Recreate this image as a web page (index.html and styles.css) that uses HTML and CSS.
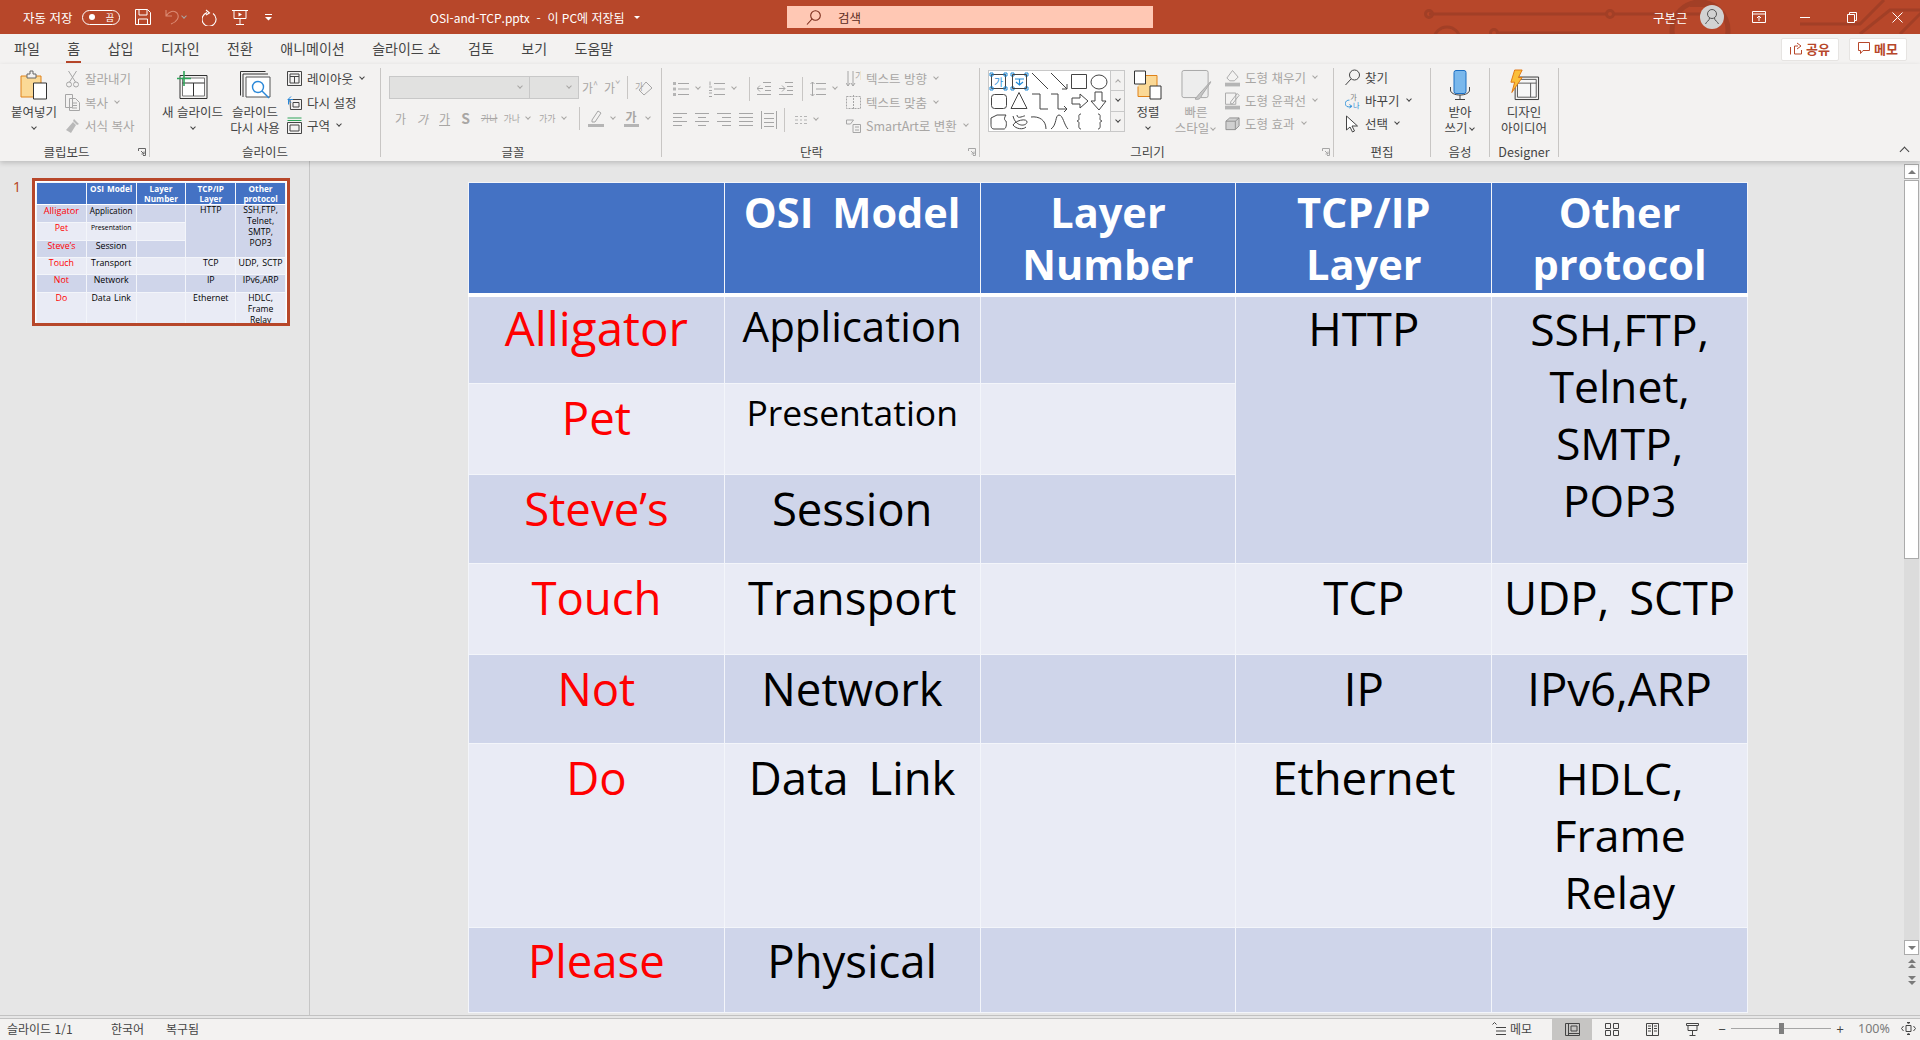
FILE: index.html
```html
<!DOCTYPE html>
<html lang="ko">
<head>
<meta charset="utf-8">
<title>OSI-and-TCP.pptx</title>
<link rel="stylesheet" href="styles.css">
</head>
<body>
<div class="app">
  <header class="titlebar">
    <svg class="circuit" width="520" height="34" viewBox="0 0 520 34" fill="none" stroke="#A23F26" stroke-width="3">
      <path d="M9 14H186M194 14H300"/><circle cx="9" cy="14" r="3.5"/><circle cx="190" cy="14" r="3.5"/>
      <circle cx="27" cy="40" r="13"/><circle cx="74" cy="33" r="3.5"/><path d="M78 33H160"/>
      <circle cx="280" cy="30" r="28" stroke-width="5"/><path d="M270 5h22l-8 16" stroke-width="4"/>
      <path d="M380 24h60l24-24M440 34l30-24h50M480 34l24-24"/>
    </svg>
    <span class="tb-label tb-autosave">자동 저장</span>
    <span class="toggle"><i class="toggle-dot"></i><b class="toggle-txt">끔</b></span>
    <svg class="qa qa-save" width="16" height="16" viewBox="0 0 16 16" fill="none" stroke="#fff"><path d="M.5.5h12l3 3v12H.5zM4 .5V6h8V.5M3.5 15.5V10h9v5.5"/></svg>
    <svg class="qa qa-undo" width="15" height="16" viewBox="0 0 15 16" fill="none" stroke="#DB8A73" stroke-width="1.1"><path d="M1 1v6h6M1 7c3-5 8-6 11-3 3 4 0 9-6 11"/></svg>
    <i class="chev chev-dim qa-undo-c"></i>
    <svg class="qa qa-redo" width="16" height="17" viewBox="0 0 16 17" fill="none" stroke="#fff" stroke-width="1.1"><path d="M11 4.500A7 7 0 1 1 5 3.600M4 1l3.500 3L4 6"/></svg>
    <svg class="qa qa-show" width="16" height="16" viewBox="0 0 16 16" fill="none" stroke="#fff"><path d="M0 1.500h16M2 1.500v8h12v-8M8 9.500V15M4 15.500h8"/><path d="M6.500 3.500l3.500 2-3.500 2z" fill="#fff" stroke="none"/></svg>
    <svg class="qa qa-more" width="7" height="7" viewBox="0 0 7 7" fill="#fff"><path d="M0 0h7v1H0zM0 3h7L3.500 6.500z"/></svg>
    <span class="tb-label tb-file">OSI-and-TCP.pptx  -  이 PC에 저장됨</span>
    <i class="tb-caret"></i>
    <div class="search">
      <svg width="15" height="15" viewBox="0 0 15 15" fill="none" stroke="#7A2C1B" stroke-width="1.100"><circle cx="9.500" cy="5.500" r="4.800"/><path d="M6 9l-5 5.500"/></svg>
      <span>검색</span>
    </div>
    <span class="tb-label tb-user">구본근</span>
    <span class="avatar"><svg width="24" height="24" viewBox="0 0 24 24" fill="none" stroke="#555"><circle cx="12" cy="9" r="4.500"/><path d="M9.500 13c0 3-3 3-4 6M14.500 13c0 3 3 3 4 6"/></svg></span>
    <svg class="win win-ribbon" width="14" height="12" viewBox="0 0 14 12" fill="none" stroke="#fff"><path d="M.5.5h13v11H.5zM.5 3h13M7 10V5M5 7l2-2 2 2"/></svg>
    <svg class="win win-min" width="10" height="10" viewBox="0 0 10 10" stroke="#fff"><path d="M0 5.500h10"/></svg>
    <svg class="win win-rest" width="10" height="11" viewBox="0 0 10 11" fill="none" stroke="#fff"><path d="M.5 2.500h7v8h-7zM2.500 2.500V.5h7v8h-2"/></svg>
    <svg class="win win-close" width="11" height="11" viewBox="0 0 11 11" stroke="#fff"><path d="M.5.5l10 10M10.500.5l-10 10"/></svg>
  </header>

  <nav class="tabs">
    <span class="tab">파일</span><span class="tab tab-on">홈</span><span class="tab">삽입</span><span class="tab">디자인</span><span class="tab">전환</span><span class="tab">애니메이션</span><span class="tab">슬라이드 쇼</span><span class="tab">검토</span><span class="tab">보기</span><span class="tab">도움말</span>
    <button class="pill pill-share"><svg width="12" height="13" viewBox="0 0 12 13" fill="none" stroke="#B7472A"><path d="M8 4H4.500v8h7V8M.5 12.500V5M7 1l4 3-4 3"/></svg>공유</button>
    <button class="pill"><svg width="12" height="12" viewBox="0 0 12 12" fill="none" stroke="#B7472A"><path d="M.5.5h11v8H5l-2.500 3v-3h-2z"/></svg>메모</button>
  </nav>

  <section class="ribbon">
    <div class="group g1">
      <div class="gbody">
        <div class="large w48">
          <svg class="lg-icon" width="28" height="30" viewBox="0 0 28 30" fill="none"><path d="M1 6h20v21H1z" fill="#FBD996" stroke="#E08218"/><path d="M7 4h3V1h3v3h3v4H7z" fill="#F3F2F1" stroke="#666"/><path d="M13.500 13h13v16h-13z" fill="#fff" stroke="#333"/></svg>
          <span>붙여넣기</span><i class="chev chev-lg"></i>
        </div>
        <div class="rows off ml7">
          <div class="row"><svg width="14" height="18" viewBox="0 0 14 18" fill="none" stroke="#A6A6A6"><path d="M3 1l7 11M11 1L4 12"/><circle cx="3.500" cy="14.500" r="2.500"/><circle cx="10.500" cy="14.500" r="2.500"/></svg>잘라내기</div>
          <div class="row"><svg width="15" height="17" viewBox="0 0 15 17" fill="none" stroke="#A6A6A6"><path d="M.5.5h7v13h-7zM4.500 4.500h6l4 4v8h-10zM7 9h5M7 11.500h5M7 14h5"/></svg>복사<i class="chev chev-dim ml10"></i></div>
          <div class="row"><svg width="15" height="16" viewBox="0 0 15 16" fill="#B9B9B9"><path d="M9 1l5 5-2 1-4-4zM8 4l3 3-5 8-5-3z"/></svg>서식 복사</div>
        </div>
      </div>
      <div class="glabel lab16">클립보드<svg class="launcher" width="8" height="8" viewBox="0 0 8 8" fill="none" stroke="#666"><path d="M.5 3V.5h7v7H5M3 3l3 3M6 3.500V6H3.500"/></svg></div>
    </div>

    <div class="group g2">
      <div class="gbody">
        <div class="large w63">
          <svg class="lg-icon" width="31" height="30" viewBox="0 0 31 30" fill="none"><path d="M3 5.500h27v23H3z" stroke="#333"/><path d="M5.500 8h22v18h-22z" stroke="#777" fill="#fff"/><path d="M5.500 13h22M16.500 13v13" stroke="#333"/><path d="M0 8.500h14M7 1v15" stroke="#2FA55A" stroke-width="1.600"/></svg>
          <span>새 슬라이드</span><i class="chev chev-lg"></i>
        </div>
        <div class="large w52 ml5">
          <svg class="lg-icon" width="31" height="30" viewBox="0 0 31 30" fill="none"><path d="M.5 1.500h25M.5 1.500v24M3 4h25M3 4v23" stroke="#333"/><path d="M6 7h24v20H6z" stroke="#555" fill="#fff"/><circle cx="18" cy="17" r="5.500" stroke="#2B88D8" stroke-width="1.400"/><path d="M22 21l7 7" stroke="#2B88D8" stroke-width="1.400"/></svg>
          <span>슬라이드</span><span>다시 사용</span>
        </div>
        <div class="rows ml6">
          <div class="row"><svg width="15" height="15" viewBox="0 0 15 15" fill="none" stroke="#444"><path d="M.5.5h14v14H.5zM3 3h9v9H3zM3 5.500h9M7.500 5.500V12"/></svg>레이아웃<i class="chev"></i></div>
          <div class="row"><svg width="15" height="15" viewBox="0 0 15 15" fill="none"><path d="M3 4.500h11.500v10h-11zM6 7.500h6v4.500H6z" stroke="#444"/><path d="M1 4.500h5M1 4.500l3-3M1 4.500l3 3M1.500 4.500v5" stroke="#2B88D8"/></svg>다시 설정</div>
          <div class="row"><svg width="15" height="17" viewBox="0 0 15 17" fill="none"><path d="M.5 3.500h14M.5 1h14" stroke="#2FA55A"/><path d="M.5 5.500h14v11H.5zM3 8h9v6H3z" stroke="#444"/></svg>구역<i class="chev"></i></div>
        </div>
      </div>
      <div class="glabel">슬라이드</div>
    </div>

    <div class="group g3">
      <div class="gbody gcol">
        <div class="fontrow">
          <span class="combo c-name"><i class="chev chev-dim"></i></span><span class="combo c-size"><i class="chev chev-dim"></i></span>
          <span class="glyph gl1">가<sup>^</sup></span><span class="glyph gl2">가<sup>ˇ</sup></span><span class="vsep"></span>
          <svg class="eraser" width="18" height="18" viewBox="0 0 18 18" fill="none" stroke="#A6A6A6"><path d="M9 16l-5-5 7-8 6 6z"/><text x="0" y="11" class="ertxt">가</text></svg>
        </div>
        <div class="fontrow2">
          <span class="glyph">가</span><span class="glyph gi">가</span><span class="glyph gu">가</span><b class="glyph gs">S</b><span class="glyph gstr">가나</span><span class="glyph tiny t1">가나<i class="chev chev-dim"></i></span><span class="glyph tiny t2">가가<i class="chev chev-dim"></i></span><span class="vsep vsep2"></span>
          <svg class="pen" width="16" height="18" viewBox="0 0 16 18" fill="none"><path d="M4 11l6-9 3 2-6 9H4z" stroke="#A6A6A6"/><path d="M0 15h16v3H0z" fill="#B5B5B5"/></svg><i class="chev chev-dim"></i>
          <span class="glyph gbar">가</span><i class="chev chev-dim"></i>
        </div>
      </div>
      <div class="glabel lab16">글꼴</div>
    </div>

    <div class="group g4">
      <div class="gbody">
        <div class="para">
          <div class="pararow">
            <svg width="16" height="16" viewBox="0 0 16 16" stroke="#A6A6A6" fill="none"><path d="M5 2.500h11M5 8h11M5 13.500h11"/><path d="M0 1h3v3H0zM0 6.500h3v3H0zM0 12h3v3H0z" fill="#B5B5B5" stroke="none"/></svg><i class="chev chev-dim"></i>
            <svg class="ml9" width="16" height="16" viewBox="0 0 16 16" stroke="#A6A6A6" fill="none"><path d="M5 2.500h11M5 8h11M5 13.500h11M1 .5v4M0 6h3M0 9.500h3M0 12h3M0 15.500h3"/></svg><i class="chev chev-dim"></i>
            <span class="vsep vs3"></span>
            <svg width="14" height="13" viewBox="0 0 14 13" stroke="#A6A6A6" fill="none"><path d="M6 .5h8M8 4.500h6M8 8.500h6M0 12.500h14M0 6.500h6M3 3.500l-3 3 3 3"/></svg>
            <svg class="ml8" width="14" height="13" viewBox="0 0 14 13" stroke="#A6A6A6" fill="none"><path d="M6 .5h8M8 4.500h6M8 8.500h6M0 12.500h14M0 6.500h6M3 3.500l3 3-3 3"/></svg>
            <span class="vsep vs5"></span>
            <svg width="16" height="16" viewBox="0 0 16 16" stroke="#A6A6A6" fill="none"><path d="M6 2.500h10M6 8h10M6 13.500h10M2.500 1v14M.5 3l2-2 2 2M.5 13l2 2 2-2"/></svg><i class="chev chev-dim"></i>
          </div>
          <div class="pararow pr2">
            <svg width="14" height="13" viewBox="0 0 14 13" stroke="#A6A6A6"><path d="M0 .5h14M0 4.500h9M0 8.500h14M0 12.500h9"/></svg>
            <svg class="ml8" width="14" height="13" viewBox="0 0 14 13" stroke="#A6A6A6"><path d="M0 .5h14M3 4.500h8M0 8.500h14M3 12.500h8"/></svg>
            <svg class="ml8" width="14" height="13" viewBox="0 0 14 13" stroke="#A6A6A6"><path d="M0 .5h14M5 4.500h9M0 8.500h14M5 12.500h9"/></svg>
            <svg class="ml8" width="14" height="13" viewBox="0 0 14 13" stroke="#A6A6A6"><path d="M0 .5h14M0 4.500h14M0 8.500h14M0 12.500h14"/></svg>
            <svg class="ml8" width="16" height="18" viewBox="0 0 16 18" stroke="#A6A6A6" fill="none"><path d="M.5 0v18M15.500 0v18M3 2.500h10M3 7.500h10M3 11.500h10M3 15.500h10"/></svg>
            <span class="vsep vs4"></span>
            <svg width="12" height="8" viewBox="0 0 12 8" stroke="#B5B5B5"><path d="M0 .5h3M5 .5h2M9 .5h3M0 4h3M5 4h2M9 4h3M0 7.500h3M5 7.500h2M9 7.500h3"/></svg><i class="chev chev-dim"></i>
          </div>
        </div>
        <div class="rows off pararight">
          <div class="row"><svg width="15" height="18" viewBox="0 0 15 18" fill="none" stroke="#A6A6A6"><path d="M2 1v15M0 13l2 3 2-3M7 1v15M5 13l2 3 2-3"/><text x="9" y="9" class="ertxt">가</text></svg>텍스트 방향<i class="chev chev-dim"></i></div>
          <div class="row"><svg width="15" height="15" viewBox="0 0 15 15" fill="none" stroke="#A6A6A6" stroke-dasharray="2 1"><path d="M.5 1.500h14v12H.5zM7.500 0v15"/></svg>텍스트 맞춤<i class="chev chev-dim"></i></div>
          <div class="row"><svg width="15" height="14" viewBox="0 0 15 14" fill="none" stroke="#A6A6A6"><path d="M.5 1h7l-3 4h-4zM7 5.500h7.500v8H7zM9 8h4M9 11h4"/></svg>SmartArt로 변환<i class="chev chev-dim"></i></div>
        </div>
      </div>
      <div class="glabel lab18">단락<svg class="launcher" width="8" height="8" viewBox="0 0 8 8" fill="none" stroke="#A6A6A6"><path d="M.5 3V.5h7v7H5M3 3l3 3M6 3.500V6H3.500"/></svg></div>
    </div>

    <div class="group g5">
      <div class="gbody">
        <div class="gallery">
          <svg width="121" height="60" viewBox="0 0 121 60" fill="none" stroke="#444">
            <path d="M2.500 3.500h14v14h-14z"/><path d="M1 2h3v3H1zM15 2h3v3h-3zM1 16h3v3H1zM15 16h3v3h-3zM22 2h3v3h-3zM36 2h3v3h-3zM22 16h3v3h-3zM36 16h3v3h-3z" stroke="#1F8AD8"/>
            <text x="5" y="15" class="galtxt">가</text><path d="M23.500 3.500h14v14h-14z"/><path d="M26 8h9M30.500 8v6M27 11l3.500 3 3.500-3" stroke="#1F8AD8" stroke-width="1.200"/>
            <path d="M43 2l16 16M62 2l16 16M78 18v-5M78 18h-5"/><path d="M82.500 3.500h15v14h-15z"/><ellipse cx="110" cy="11" rx="8" ry="7"/>
            <rect x="2.500" y="23.500" width="15" height="14" rx="3"/><path d="M27 37.500h-5l8-16 8 16z"/><path d="M43 23h8v15h8M62 23h7v15h9M78 38l-3-3M78 38l-3 3"/><path d="M83 27h8v-4l8 7-8 7v-4h-8zM106 21h7v9h4l-7 9-8-9h4z"/>
            <path d="M8 44h9c-2 3-2 5 0 6 1 3 0 8-2 8H5c-3 0-3-3-3-5v-6z"/><path d="M24 45c3 12 14 10 14 6s-11-2-14 3c3 4 10 5 13 2M28 44c0 5 8 0 8 1"/><path d="M42 46c8-1 15 3 15 12M62 58c6-4 4-14 8-14 4 0 5 10 9 14"/><path d="M92 43c-3 0-2 3-2 5 0 1-1 2-2 2 1 0 2 1 2 2 0 2-1 6 2 6M109 43c3 0 2 3 2 5 0 1 1 2 2 2-1 0-2 1-2 2 0 2 1 6-2 6"/>
          </svg>
          <div class="galscroll"><span class="gs-up"><i class="chev chev-up"></i></span><span class="gs-mid"><i class="chev"></i></span><span class="gs-end"><i class="chev"></i></span></div>
        </div>
        <div class="large w38 ml4">
          <svg class="lg-icon" width="28" height="29" viewBox="0 0 28 29" fill="none"><path d="M8 5h15v21H4V16" fill="#FBD996" stroke="#E08218"/><path d="M.5.5h11v13H.5z" fill="#fff" stroke="#333"/><path d="M16 15.500h11v13H16z" fill="#fff" stroke="#333"/></svg>
          <span>정렬</span><i class="chev chev-lg"></i>
        </div>
        <div class="large w46 ml6 off">
          <svg class="lg-icon" width="31" height="31" viewBox="0 0 31 31" fill="none"><rect x=".5" y=".5" width="27" height="28" rx="2" stroke="#A6A6A6" fill="#EDEDED"/><path d="M30 12L19 24l-5 6c3 1 6 0 7-4l9-13z" fill="#C4C4C4" stroke="#A6A6A6"/></svg>
          <span>빠른</span><span>스타일<i class="chev chev-dim ml3"></i></span>
        </div>
        <div class="rows off ml6 tight">
          <div class="row"><svg width="16" height="18" viewBox="0 0 16 18" fill="none"><path d="M2 9l6-8 6 7-4 4H5z" stroke="#A6A6A6"/><path d="M0 14h16v4H0z" fill="#B5B5B5"/></svg>도형 채우기<i class="chev chev-dim"></i></div>
          <div class="row"><svg width="16" height="18" viewBox="0 0 16 18" fill="none"><path d="M.5.5h11v12H.5zM6 10l7-9 2 2-7 9H6z" stroke="#A6A6A6"/><path d="M0 14h16v4H0z" fill="#B5B5B5"/></svg>도형 윤곽선<i class="chev chev-dim"></i></div>
          <div class="row"><svg width="16" height="14" viewBox="0 0 16 14" fill="#D0D0D0" stroke="#8F8F8F"><path d="M1 4l4-3.500h10V9l-4 4H1zM1 4h10v9M11 4l4-3.500"/></svg>도형 효과<i class="chev chev-dim"></i></div>
        </div>
      </div>
      <div class="glabel lab18">그리기<svg class="launcher" width="8" height="8" viewBox="0 0 8 8" fill="none" stroke="#A6A6A6"><path d="M.5 3V.5h7v7H5M3 3l3 3M6 3.500V6H3.500"/></svg></div>
    </div>

    <div class="group g6">
      <div class="gbody">
        <div class="rows tight">
          <div class="row"><svg width="15" height="17" viewBox="0 0 15 17" fill="none" stroke="#444"><circle cx="9.500" cy="6" r="5"/><path d="M6 10l-5.500 6"/></svg>찾기</div>
          <div class="row"><svg width="17" height="18" viewBox="0 0 17 18" fill="none" stroke="#1F8AD8"><path d="M5 8C1 8-.5 11 1 14c1 2 4 2 6 1M5 13l3 2-3 2"/><text x="6" y="8" class="reptxt">가</text><text x="9" y="17" class="reptxt rep2">나</text></svg>바꾸기<i class="chev ml10"></i></div>
          <div class="row"><svg width="14" height="18" viewBox="0 0 14 18" fill="#fff" stroke="#444"><path d="M1 1v14l3.500-3 2.500 5 2-1-2.500-5H12z"/></svg>선택<i class="chev"></i></div>
        </div>
      </div>
      <div class="glabel">편집</div>
    </div>

    <div class="group g7">
      <div class="gbody">
        <div class="large wfull">
          <svg class="lg-icon" width="20" height="30" viewBox="0 0 20 30" fill="none"><rect x="4" y=".5" width="12" height="23" rx="2" fill="#7AB8EC" stroke="#1B6EC2"/><path d="M.5 17v3c0 3 4 5 9.500 5s9.500-2 9.500-5v-3M10 25v4M5 29.500h10" stroke="#444"/></svg>
          <span>받아</span><span>쓰기<i class="chev ml3"></i></span>
        </div>
      </div>
      <div class="glabel">음성</div>
    </div>

    <div class="group g8">
      <div class="gbody">
        <div class="large wfull">
          <svg class="lg-icon" width="31" height="32" viewBox="0 0 31 32" fill="none"><path d="M5.500 7.500h25v24h-25z" stroke="#333"/><path d="M8 10h20v19H8zM8 14h20M22 14v15" stroke="#555" fill="#F7F7F7"/><path d="M5 0h8L9 8h4L2 24l3-11H1z" fill="#FBBF3A" stroke="#E0740F"/></svg>
          <span>디자인</span><span>아이디어</span>
        </div>
      </div>
      <div class="glabel">Designer</div>
    </div>
    <i class="chev chev-up collapse"></i>
  </section>

  <main class="main">
    <aside class="slides">
      <span class="slidenum">1</span>
      <div class="thumb">
        <table class="deck deck-thumb">
          <tr class="r0"><th></th><th>OSI Model</th><th>Layer Number</th><th>TCP/IP<br>Layer</th><th>Other protocol</th></tr>
          <tr class="r1 dark"><td class="mn big">Alligator</td><td class="appl">Application</td><td></td><td rowspan="3">HTTP</td><td rowspan="3" class="multi">SSH,FTP,<br>Telnet,<br>SMTP,<br>POP3</td></tr>
          <tr class="r2 light"><td class="mn">Pet</td><td class="small">Presentation</td><td></td></tr>
          <tr class="r3 dark"><td class="mn">Steve’s</td><td>Session</td><td></td></tr>
          <tr class="r4 light"><td class="mn">Touch</td><td>Transport</td><td></td><td>TCP</td><td>UDP, SCTP</td></tr>
          <tr class="r5 dark"><td class="mn">Not</td><td>Network</td><td></td><td>IP</td><td>IPv6,ARP</td></tr>
          <tr class="r6 light"><td class="mn">Do</td><td>Data Link</td><td></td><td>Ethernet</td><td class="multi">HDLC,<br>Frame<br>Relay</td></tr>
        </table>
      </div>
    </aside>
    <section class="editor">
      <table class="deck">
        <tr class="r0"><th></th><th>OSI Model</th><th>Layer Number</th><th>TCP/IP<br>Layer</th><th>Other protocol</th></tr>
        <tr class="r1 dark"><td class="mn big">Alligator</td><td class="appl">Application</td><td></td><td rowspan="3">HTTP</td><td rowspan="3" class="multi">SSH,FTP,<br>Telnet,<br>SMTP,<br>POP3</td></tr>
        <tr class="r2 light"><td class="mn">Pet</td><td class="small">Presentation</td><td></td></tr>
        <tr class="r3 dark"><td class="mn">Steve’s</td><td>Session</td><td></td></tr>
        <tr class="r4 light"><td class="mn">Touch</td><td>Transport</td><td></td><td>TCP</td><td>UDP, SCTP</td></tr>
        <tr class="r5 dark"><td class="mn">Not</td><td>Network</td><td></td><td>IP</td><td>IPv6,ARP</td></tr>
        <tr class="r6 light"><td class="mn">Do</td><td>Data Link</td><td></td><td>Ethernet</td><td class="multi">HDLC,<br>Frame<br>Relay</td></tr>
        <tr class="r7 dark"><td class="mn">Please</td><td>Physical</td><td></td><td></td><td></td></tr>
      </table>
    </section>
    <div class="vscroll">
      <span class="sbtn"><i class="tri tri-up"></i></span>
      <span class="sthumb"></span>
      <span class="strack"></span>
      <span class="sbtn"><i class="tri tri-down"></i></span>
      <span class="snav"><i class="tri tri-up"></i><i class="tri tri-up"></i></span>
      <span class="snav"><i class="tri tri-down"></i><i class="tri tri-down"></i></span>
    </div>
  </main>

  <div class="hscroll"></div>

  <footer class="status">
    <span class="st-page">슬라이드 1/1</span><span class="st-lang">한국어</span><span class="st-rec">복구됨</span>
    <span class="st-memo"><svg width="14" height="14" viewBox="0 0 14 14" stroke="#444" fill="none"><path d="M4 5.500h10M4 9h10M4 12.500h10M.5 2.500l2-2 2 2"/></svg>메모</span>
    <span class="view view-on"><svg width="15" height="13" viewBox="0 0 15 13" fill="none" stroke="#444"><path d="M.5.5h14v12H.5zM3.500.5v12M6 3h6v5H6zM3.500 10.500h11"/></svg></span>
    <span class="view"><svg width="14" height="13" viewBox="0 0 14 13" fill="none" stroke="#444"><path d="M.5.5h5v5h-5zM8.500.5h5v5h-5zM.5 7.500h5v5h-5zM8.500 7.500h5v5h-5z"/></svg></span>
    <span class="view"><svg width="13" height="13" viewBox="0 0 13 13" fill="none" stroke="#444"><path d="M.5.5h12v12H.5zM6.500.5v12M2 3h3M2 5.500h3M2 8h3M8 3h3M8 5.500h3M8 8h3"/></svg></span>
    <span class="view"><svg width="13" height="13" viewBox="0 0 13 13" fill="none" stroke="#444"><path d="M.5.5h12v2h-12zM2 2.500v5h9v-5M6.500 7.500v5M3.500 12.500h6"/></svg></span>
    <span class="zoomctl"><i class="zm">−</i><span class="slider"><i class="knob"></i></span><i class="zm">+</i></span>
    <span class="pct">100%</span>
    <svg class="fit" width="15" height="15" viewBox="0 0 15 15" fill="none" stroke="#444"><path d="M5 4.500h5v6H5zM7.500 2.500L6 1.500h3zM7.500 12.500L6 13.500h3zM2.500 5L.5 7.500 2.500 10M12.500 5l2 2.500-2 2.500"/></svg>
  </footer>
</div>
</body>
</html>
```
FILE: styles.css
```css
* { box-sizing: border-box; }
html, body { margin: 0; height: 100%; overflow: hidden; }
body { font-family: "Noto Sans CJK KR", "Noto Sans", sans-serif; color: #444; font-size: 12.5px; }
i { font-style: normal; }
.app { display: flex; flex-direction: column; width: 1920px; height: 1040px; background: #E6E6E6; }

.titlebar { position: relative; display: flex; align-items: center; height: 34px; background: #B7472A; color: #fff; flex: none; overflow: hidden; }
.circuit { position: absolute; left: 1420px; top: 0; }
.tb-label { position: relative; font-size: 12.5px; white-space: pre; }
.tb-autosave { margin-left: 23px; width: 59px; }
.toggle { display: flex; align-items: center; justify-content: space-between; width: 38px; height: 15px; border: 1px solid #fff; border-radius: 8px; padding: 0 5px 0 6px; }
.toggle-dot { width: 6px; height: 6px; background: #fff; border-radius: 50%; }
.toggle-txt { font-weight: 400; font-size: 9px; }
.qa { flex: none; }
.qa-save { margin-left: 15px; }
.qa-undo { margin-left: 14px; }
.qa-undo-c { margin-left: 4px; }
.qa-redo { margin-left: 14px; }
.qa-show { margin-left: 14px; }
.qa-more { margin-left: 17px; }
.tb-file { margin-left: 158px; width: 196px; font-size: 12px; }
.tb-caret { margin-left: 8px; border: 3px solid transparent; border-top: 3px solid #fff; margin-top: 3px; }
.search { display: flex; align-items: center; gap: 17px; margin-left: 147px; width: 366px; height: 22px; padding-left: 19px; background: #FFC8B4; color: #5A2A1C; font-size: 12.5px; }
.tb-user { margin-left: 500px; width: 47px; }
.avatar { position: relative; width: 24px; height: 24px; border-radius: 50%; background: #D2D2D2; overflow: hidden; }
.win { position: relative; flex: none; }
.win-ribbon { margin-left: 28px; }
.win-min { margin-left: 34px; }
.win-rest { margin-left: 37px; }
.win-close { margin-left: 35px; }

.tabs { display: flex; align-items: center; gap: 27.5px; height: 30px; padding: 0 0 3px 14px; background: #F3F2F1; flex: none; font-size: 14px; }
.tab { position: relative; line-height: 30px; white-space: nowrap; }
.tab-on::after { content: ""; position: absolute; left: -1px; right: -1px; bottom: 0; height: 2px; background: #B7472A; }
.pill { display: flex; align-items: center; justify-content: center; gap: 4px; width: 58px; height: 23px; margin: 3px 0 0 -17.5px; padding: 0 0 2px; border: 1px solid #E6E4E2; border-radius: 2px; background: #fff; color: #B7472A; font: 700 13px "Noto Sans CJK KR", sans-serif; }
.pill-share { margin-left: auto; }
.pill:last-child { margin-right: 13px; }

.ribbon { position: relative; z-index: 2; display: flex; align-items: flex-start; height: 97px; padding-top: 4px; background: #F3F2F1; box-shadow: 0 2px 5px rgba(0,0,0,.18); flex: none; font-size: 12.5px; }
.group { position: relative; display: flex; flex-direction: column; height: 89px; border-right: 1px solid #C8C6C4; flex: none; }
.g1 { width: 150px; } .g2 { width: 231px; } .g3 { width: 281px; } .g4 { width: 318px; } .g5 { width: 354px; } .g6 { width: 97px; } .g7 { width: 59px; } .g8 { width: 69px; }
.gbody { display: flex; height: 77px; }
.gcol { flex-direction: column; padding-left: 8px; }
.g1 .gbody { padding-left: 10px; }
.g2 .gbody { padding-left: 11px; }
.g4 .gbody { padding-left: 11px; }
.g5 .gbody { padding-left: 8px; }
.g6 .gbody { padding-left: 11px; }
.glabel { height: 12px; line-height: 14px; text-align: center; font-size: 12.5px; }
.lab16 { padding-right: 16px; }
.lab18 { padding-right: 18px; }
.launcher { position: absolute; right: 3px; bottom: 1px; }

.large { display: flex; flex-direction: column; align-items: center; line-height: 16px; white-space: nowrap; flex: none; }
.lg-icon { height: 30px; margin: 2px 0 4px; flex: none; overflow: visible; }
.w48 { width: 48px; } .w63 { width: 63px; } .w52 { width: 52px; } .w38 { width: 38px; } .w46 { width: 46px; } .wfull { width: 100%; }
.rows { display: flex; flex-direction: column; flex: none; margin-top: -1px; }
.tight { margin-top: -2px; }
.row { display: flex; align-items: center; gap: 5px; height: 23.5px; white-space: nowrap; }
.tight .row { height: 23px; }
.row svg { width: 15px; flex: none; }
.off, .off .row { color: #A8A6A4; }
.ml3 { margin-left: 3px; } .ml4 { margin-left: 4px; } .ml5 { margin-left: 5px; } .ml6 { margin-left: 6px; } .ml7 { margin-left: 7px; } .ml8 { margin-left: 8px; } .ml9 { margin-left: 9px; } .ml10 { margin-left: 10px; }
.ertxt { font: 9px "Noto Sans CJK KR", sans-serif; fill: #A8A6A4; stroke: none; }
.reptxt { font: 8px "Noto Sans CJK KR", sans-serif; fill: #777; stroke: none; }
.rep2 { fill: #1F8AD8; }

.chev { display: inline-block; width: 4px; height: 4px; border-right: 1px solid #444; border-bottom: 1px solid #444; transform: rotate(45deg); margin: 0 2px 3px; flex: none; }
.chev-dim { border-color: #A8A6A4; }
.chev-lg { margin-top: 5px; }
.chev-up { transform: rotate(225deg); margin: 3px 2px 0; }
.collapse { position: absolute; right: 10px; bottom: 6px; width: 7px; height: 7px; }

.fontrow { display: flex; align-items: center; height: 23px; margin-top: 8px; color: #A8A6A4; }
.combo { display: flex; align-items: center; justify-content: flex-end; height: 23px; padding-right: 5px; background: #E1E1E0; border: 1px solid #C8C8C8; }
.c-name { width: 141px; } .c-size { width: 49px; border-left: 0; }
.glyph { color: #A8A6A4; font-size: 12px; }
.glyph sup { font-size: 9px; line-height: 0; }
.gl1 { margin-left: 3px; } .gl2 { margin-left: 6px; }
.vsep { width: 1px; height: 23px; background: #C8C6C4; margin: 0 6px; flex: none; }
.eraser { margin-left: 1px; flex: none; }
.fontrow2 { display: flex; align-items: center; gap: 11px; margin: 8px 0 0 6px; height: 22px; white-space: nowrap; }
.gi { font-style: italic; }
.gu { text-decoration: underline; }
.gs { font-size: 14px; }
.gstr { text-decoration: line-through; font-size: 9px; }
.tiny { font-size: 9px; display: flex; align-items: center; }
.tiny .chev { margin-left: 6px; }
.t1 { margin-left: -5px; }
.t2 { margin-left: -4px; }
.vsep2 { margin: 0; }
.pen { margin-left: -3px; flex: none; }
.gbar { margin-left: -4px; padding: 0 2px; border-bottom: 3px solid #B5B5B5; line-height: 14px; font-weight: 700; }
.fontrow2 > .chev { margin: 0 2px 3px -4px; }

.para { width: 173px; flex: none; }
.pararow { display: flex; align-items: center; height: 23px; margin-top: 9px; }
.pararow .chev { margin: 0 0 3px 7px; }
.pr2 { margin-top: 8px; }
.vs3 { height: 24px; margin: 0 7px 0 13px; }
.vs5 { height: 24px; margin: 0 7px 0 9px; }
.vs4 { height: 24px; margin: 0 10px 0 7px; }

.gallery { display: flex; width: 137px; height: 62px; margin-top: 2px; background: #fff; border: 1px solid #C8C8C8; flex: none; }
.gallery svg { flex: none; overflow: hidden; }
.galtxt { font: 10px "Noto Sans CJK KR", sans-serif; fill: #1F8AD8; stroke: none; }
.galscroll { display: flex; flex-direction: column; width: 15px; margin-left: auto; border-left: 1px solid #C8C8C8; background: #F3F2F1; }
.galscroll span { flex: 1; display: flex; align-items: center; justify-content: center; border-bottom: 1px solid #C8C8C8; }
.galscroll span:last-child { border: 0; }
.gs-up .chev { border-color: #A8A6A4; }

.main { display: flex; flex: 1; min-height: 0; background: #E6E6E6; }
.slides { display: flex; align-items: flex-start; width: 310px; padding: 17px 0 0 13px; border-right: 1px solid #C6C6C6; flex: none; }
.slidenum { width: 19px; font: 14px/17px "Noto Sans", sans-serif; color: #B7472A; }
.thumb { width: 258px; height: 148px; padding: 1px; border: 3px solid #B7472A; background: #fff; overflow: hidden; flex: none; }
.editor { flex: 1; padding: 21px 0 0 158px; overflow: hidden; }

.deck { width: 1280px; table-layout: fixed; border-collapse: collapse; font-family: "Open Sans", "Noto Sans", sans-serif; color: #000; font-size: 45.5px; line-height: 57px; word-spacing: 8px; text-align: center; }
.deck th, .deck td { padding: 0; border: 1px solid #F3F5FA; vertical-align: top; overflow: hidden; }
.deck th { background: #4472C4; color: #fff; font-size: 41.5px; font-weight: 700; line-height: 52px; border-bottom: 4px solid #fff; padding-top: 3px; }
.deck .appl { font-size: 42px; }
.deck .multi { font-size: 44.5px; }
.dark td { background: #CFD5EA; }
.light td { background: #E9EBF5; }
.mn { color: #F00; }
.deck .big { font-size: 47.5px; }
.deck .small { font-size: 35.5px; line-height: 48px; }
.r0 { height: 112px; } .r1 { height: 89px; } .r2 { height: 91px; } .r3 { height: 89px; } .r4 { height: 91px; } .r5 { height: 89px; } .r6 { height: 184px; } .r7 { height: 85px; }
.editor .deck td { padding-top: 5px; }
.editor .deck .r1 td { padding-top: 3px; }
.editor .deck .r1 .big { padding-top: 2px; }
.editor .deck .r1 .appl { padding-top: 0; }
.editor .deck .small { padding-top: 4px; }
.editor .deck .r7 td { padding-top: 4px; }

.deck-thumb { width: 250px; font-size: 8.8px; line-height: 11px; word-spacing: 1px; }
.deck.deck-thumb th { font-size: 8.2px; line-height: 10px; border-bottom: 1px solid #fff; padding-top: 1px; }
.deck.deck-thumb .appl { font-size: 8.2px; }
.deck.deck-thumb .multi { font-size: 8.6px; }
.deck.deck-thumb .big { font-size: 9.2px; }
.deck.deck-thumb .small { font-size: 6.8px; line-height: 9px; }
.deck-thumb .r0 { height: 21px; } .deck-thumb .r1 { height: 18px; } .deck-thumb .r2 { height: 18px; } .deck-thumb .r3 { height: 17px; } .deck-thumb .r4 { height: 17px; } .deck-thumb .r5 { height: 18px; } .deck-thumb .r6 { height: 33px; }

.vscroll { display: flex; flex-direction: column; align-items: stretch; width: 15px; margin: 3px 1px 0 0; flex: none; }
.sbtn { display: flex; align-items: center; justify-content: center; height: 15px; background: #fff; border: 1px solid #ABABAB; flex: none; }
.sthumb { height: 379px; margin-top: 1px; background: #fff; border: 1px solid #ABABAB; flex: none; }
.strack { flex: 1; background: #DCDCDC; }
.snav { display: flex; flex-direction: column; align-items: center; justify-content: center; height: 17px; gap: 1px; flex: none; }
.vscroll .snav:last-child { margin-bottom: 26px; }
.tri { width: 0; height: 0; border-left: 4px solid transparent; border-right: 4px solid transparent; }
.tri-up { border-bottom: 4px solid #7A7A7A; }
.tri-down { border-top: 4px solid #7A7A7A; }

.hscroll { height: 4px; border-top: 1px solid #C2C2C2; border-bottom: 1px solid #C2C2C2; flex: none; }
.status { display: flex; align-items: center; height: 21px; padding-bottom: 2px; background: #F3F2F1; font-size: 12px; flex: none; }
.st-page { margin-left: 7px; width: 70px; white-space: nowrap; }
.st-lang { margin-left: 34px; width: 36px; }
.st-rec { margin-left: 19px; width: 36px; }
.st-memo { display: flex; align-items: center; gap: 4px; margin-left: auto; width: 60px; }
.view { display: flex; align-items: center; justify-content: center; width: 40px; height: 21px; margin-top: 2px; }
.view-on { background: #C6C5C3; }
.zoomctl { display: flex; align-items: center; margin-left: 3px; color: #444; }
.zm { width: 14px; text-align: center; font-size: 13px; }
.slider { position: relative; display: block; width: 100px; height: 1px; margin: 0 2px; background: #A6A6A6; }
.knob { position: absolute; left: 48px; top: -5px; width: 5px; height: 11px; background: #7F7F7F; }
.pct { margin-left: 11px; color: #7A7A7A; font-size: 12.5px; width: 34px; font-family: "Noto Sans", sans-serif; }
.fit { margin: 0 4px 0 9px; flex: none; }
```
